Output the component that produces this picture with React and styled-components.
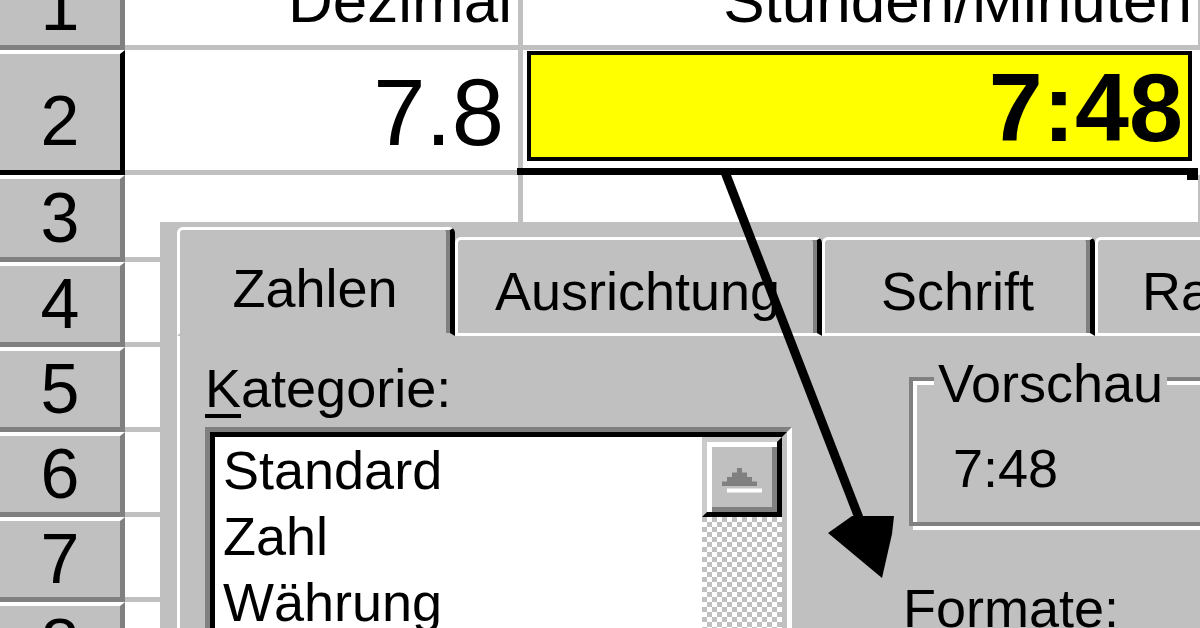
import styled, { createGlobalStyle } from "styled-components";

const GlobalStyle = createGlobalStyle`
  html, body {
    margin: 0;
    padding: 0;
    background: #fff;
  }
  body {
    font-family: "Liberation Sans", Arial, sans-serif;
    overflow: hidden;
  }
`;

const Screen = styled.div`
  position: relative;
  width: 1200px;
  height: 628px;
  overflow: hidden;
  background: #fff;
  color: #000;
`;

const Sheet = styled.div`
  display: grid;
  grid-template-columns: 125px 398px 680px;
  grid-template-rows: 50px 125px 87px 85px 85px 85px 85px 85px;
`;

const RowHead = styled.div`
  box-sizing: border-box;
  display: flex;
  justify-content: center;
  align-items: ${(p) => (p.$pb !== undefined ? "flex-end" : "center")};
  padding-bottom: ${(p) => p.$pb || 0}px;
  background: #c0c0c0;
  border-top: ${(p) => (p.$first ? "0" : "4px solid #fff")};
  border-right: 5px solid ${(p) => (p.$active ? "#000" : "#808080")};
  border-bottom: 5px solid ${(p) => (p.$active ? "#000" : "#808080")};
  font-size: 70px;
  line-height: 70px;
`;

const Cell = styled.div`
  box-sizing: border-box;
  display: flex;
  justify-content: flex-end;
  align-items: flex-end;
  background: #fff;
  border-right: 5px solid #c0c0c0;
  border-bottom: 5px solid #c0c0c0;
  padding: 0 ${(p) => p.$pr || 0}px ${(p) => p.$pb || 0}px 0;
  font-size: ${(p) => p.$size || 62}px;
  line-height: 1;
  white-space: nowrap;
`;

const ActiveCell = styled.div`
  position: relative;
  z-index: 1;
  display: flex;
  flex-direction: column;
  padding: 1px 0 0 4px;
  background: #fff;
`;

const YellowBox = styled.div`
  box-sizing: border-box;
  width: 665px;
  height: 114px;
  background: #ffff00;
  border: 4px solid #000;
  display: flex;
  justify-content: flex-end;
  align-items: flex-end;
  padding: 0 5px 1px 0;
  font-size: 97px;
  line-height: 1;
  font-weight: 700;
`;

const SelectionEdge = styled.div`
  margin: 7px 0 0 -10px;
  width: 675px;
  height: 7px;
  background: #000;
`;

const FillHandle = styled.div`
  position: absolute;
  left: 664px;
  top: 118px;
  width: 11px;
  height: 12px;
  background: #000;
`;

const Dialog = styled.div`
  position: absolute;
  left: 160px;
  top: 222px;
  width: 1200px;
  height: 460px;
  box-sizing: border-box;
  padding: 5px 0 0 17px;
  background: #c0c0c0;
  font-size: 54px;
  line-height: 62px;
  z-index: 2;
`;

const TabStrip = styled.div`
  display: flex;
  align-items: flex-end;
  height: 109px;
`;

const Tab = styled.div`
  box-sizing: border-box;
  flex: none;
  width: ${(p) => p.$w}px;
  height: ${(p) => (p.$active ? 109 : 99)}px;
  padding-top: ${(p) => (p.$active ? 27 : 20)}px;
  text-align: center;
  white-space: nowrap;
  overflow: hidden;
  border-top: 3px solid #fff;
  border-left: 3px solid #fff;
  border-right: 5px solid #000;
  border-bottom: 3px solid ${(p) => (p.$active ? "#c0c0c0" : "#fff")};
  border-radius: 6px 6px 0 0;
  box-shadow: inset -4px 0 0 #808080;
`;

const Panel = styled.div`
  display: flex;
  height: 400px;
  border-left: 3px solid #fff;
  padding: 21px 0 0 25px;
`;

const LeftCol = styled.div`
  flex: none;
  display: flex;
  flex-direction: column;
  width: 587px;
`;

const Label = styled.div`
  white-space: nowrap;
  u {
    text-decoration-thickness: 4px;
    text-underline-offset: 7px;
  }
`;

const ListOuter = styled.div`
  margin-top: 8px;
  border: 5px solid;
  border-color: #808080 #fff #fff #808080;
`;

const ListInner = styled.div`
  display: flex;
  height: 300px;
  background: #fff;
  border: 5px solid;
  border-color: #000 #c0c0c0 #c0c0c0 #000;
`;

const Items = styled.div`
  flex: 1;
  padding-left: 8px;
  line-height: 66px;
`;

const Scrollbar = styled.div`
  flex: none;
  width: 80px;
  display: flex;
  flex-direction: column;
`;

const ScrollButton = styled.div`
  box-sizing: border-box;
  height: 80px;
  display: flex;
  justify-content: center;
  align-items: center;
  background: #c0c0c0;
  border: 5px solid;
  border-color: #cbcbcb #000 #000 #cbcbcb;
  box-shadow: inset 5px 5px 0 #fff, inset -5px -5px 0 #808080;
  svg {
    margin-top: 8px;
  }
`;

const Track = styled.div`
  flex: 1;
  background: repeating-conic-gradient(#fff 0 25%, #c0c0c0 0 50%) 0 0 / 10px 10px;
`;

const RightCol = styled.div`
  flex: none;
  display: flex;
  flex-direction: column;
  margin-left: 111px;
`;

const GroupBox = styled.div`
  display: flex;
  flex-direction: column;
  width: 300px;
  margin: 20px 0 0 6px;
  padding: 0 0 23px 40px;
  border: 4px solid #808080;
  box-shadow: inset 4px 4px 0 #fff, 4px 4px 0 #fff;
`;

const Legend = styled.div`
  align-self: flex-start;
  margin: -23px 0 0 -19px;
  padding: 0 4px;
  background: #c0c0c0;
  line-height: 50px;
`;

const Preview = styled.div`
  margin-top: 29px;
`;

const FormatLabel = styled(Label)`
  margin-top: 51px;
`;

const Overlay = styled.svg`
  position: absolute;
  left: 0;
  top: 0;
  z-index: 10;
  pointer-events: none;
`;

const rows = ["3", "4", "5", "6", "7", "8"];

const UpArrow = () => (
  <svg width="40" height="26" viewBox="0 0 40 26">
    <polygon
      fill="#808080"
      points="15,0 20,0 20,4.5 25,4.5 25,9 30,9 30,13.5 35,13.5 35,18 0,18 0,13.5 5,13.5 5,9 10,9 10,4.5 15,4.5"
    />
    <rect x="5" y="20.5" width="35" height="4" fill="#fff" />
  </svg>
);

export default function App() {
  return (
    <Screen>
      <GlobalStyle />
      <Sheet>
        <RowHead $first $pb={4}>1</RowHead>
        <Cell $pr={6} $pb={13}>Dezimal</Cell>
        <Cell $pr={6} $pb={13}>Stunden/Minuten</Cell>

        <RowHead $active $pb={14}>2</RowHead>
        <Cell $size={94} $pr={14} $pb={10}>7.8</Cell>
        <ActiveCell>
          <YellowBox>7:48</YellowBox>
          <SelectionEdge />
          <FillHandle />
        </ActiveCell>

        {rows.map((r) => [
          <RowHead key={`h${r}`}>{r}</RowHead>,
          <Cell key={`a${r}`} />,
          <Cell key={`b${r}`} />,
        ])}
      </Sheet>

      <Dialog>
        <TabStrip>
          <Tab $active $w={278}>Zahlen</Tab>
          <Tab $w={367}>Ausrichtung</Tab>
          <Tab $w={273}>Schrift</Tab>
          <Tab $w={300}>Rahmen</Tab>
        </TabStrip>
        <Panel>
          <LeftCol>
            <Label>
              <u>K</u>ategorie:
            </Label>
            <ListOuter>
              <ListInner>
                <Items>
                  <div>Standard</div>
                  <div>Zahl</div>
                  <div>Währung</div>
                  <div>Buchhaltung</div>
                </Items>
                <Scrollbar>
                  <ScrollButton>
                    <UpArrow />
                  </ScrollButton>
                  <Track />
                </Scrollbar>
              </ListInner>
            </ListOuter>
          </LeftCol>
          <RightCol>
            <GroupBox>
              <Legend>Vorschau</Legend>
              <Preview>7:48</Preview>
            </GroupBox>
            <FormatLabel>Formate:</FormatLabel>
          </RightCol>
        </Panel>
      </Dialog>

      <Overlay width="1200" height="628" viewBox="0 0 1200 628">
        <line x1="725" y1="172" x2="866" y2="536" stroke="#000" strokeWidth="9" />
        <polygon fill="#000" points="852,516 894,516 892,534 882,578 828,533" />
      </Overlay>
    </Screen>
  );
}
